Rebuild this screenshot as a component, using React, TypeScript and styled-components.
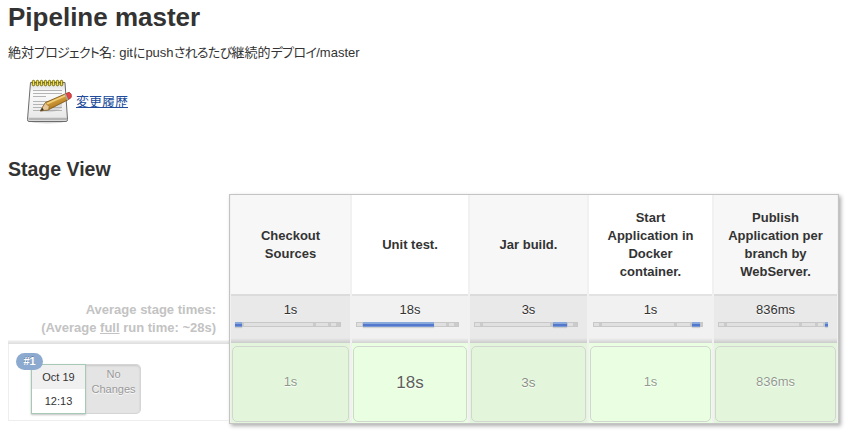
import React from "react";
import styled, { createGlobalStyle, css } from "styled-components";

const GlobalStyle = createGlobalStyle`
  body {
    margin: 0;
    background: #fff;
    color: #333;
    font: 13px/18px "Liberation Sans", "Noto Sans CJK JP", sans-serif;
  }
`;

const Page = styled.main`
  width: 848px;
  height: 433px;
  box-sizing: border-box;
  padding: 0 9px 0 8px;
  overflow: hidden;
`;

const Title = styled.h1`
  margin: 0;
  padding-top: 1px;
  font-size: 26px;
  line-height: 32px;
`;

const ProjectName = styled.p`
  margin: 11px 0 0;
  height: 18px;
  white-space: nowrap;
  font-feature-settings: "palt";
`;

const Kana = styled.span<{ $spacing: number }>`
  letter-spacing: ${(p) => p.$spacing}px;
`;

const Changes = styled.div`
  display: flex;
  align-items: center;
  gap: 2px;
  height: 48px;
  margin: 15px 0 0 16px;
`;

const ChangesLink = styled.a`
  color: #204a9a;
  text-decoration: underline;
  margin-top: 2px;
`;

const Heading = styled.h2`
  margin: 32px 0 0;
  font-size: 19.5px;
  line-height: 24px;
`;

const StageView = styled.section`
  display: grid;
  grid-template-columns: 221px 610px;
  margin-top: 13px;
`;

const RunColumn = styled.div`
  display: flex;
  flex-direction: column;
`;

const AverageLabel = styled.div`
  box-sizing: border-box;
  height: 150px;
  padding: 107px 13px 0 0;
  text-align: right;
  font-weight: bold;
  color: #c3c3c3;
  background: linear-gradient(to bottom, transparent 146px, #ececec 147px, #dedede 150px);
`;

const Run = styled.div`
  position: relative;
  box-sizing: border-box;
  height: 77px;
  border: solid #eee;
  border-width: 0 0 1px 1px;
  padding: 20px 0 0 22px;
  display: flex;
`;

const Badge = styled.span`
  position: absolute;
  left: 7px;
  top: 9px;
  width: 27px;
  height: 17px;
  border-radius: 9px;
  background: #8caad0;
  color: #fff;
  font: bold 11px/17px "Liberation Sans", sans-serif;
  text-align: center;
  text-shadow: 0 -1px 0 rgba(0, 0, 0, 0.25);
`;

const Stamp = styled.div`
  box-sizing: border-box;
  width: 55px;
  height: 50px;
  border: 1px solid #a6c9b5;
  box-shadow: 0 1px 2px rgba(0, 0, 0, 0.25);
  font-size: 11px;
  line-height: 24px;
  text-align: center;
  background: linear-gradient(#f0f0f0 24px, #fff 24px);
`;

const Commits = styled.div`
  box-sizing: border-box;
  width: 55px;
  height: 50px;
  border: 1px solid #d5d5d5;
  border-left: 0;
  border-radius: 0 5px 5px 0;
  background: #e4e4e4;
  box-shadow: inset 0 1px 2px rgba(0, 0, 0, 0.12);
  padding: 2px 4px 0 5px;
  color: #999;
  font-size: 11px;
  line-height: 15px;
  text-align: center;
  text-shadow: 0 1px 1px #fff;
`;

const StageTable = styled.div`
  box-sizing: border-box;
  height: 230px;
  border: 1px solid #c4c4c4;
  box-shadow: 2px 2px 4px rgba(0, 0, 0, 0.32);
  display: grid;
  grid-template-columns: 121px 118px 119px 125px 125px;
`;

const Stage = styled.div<{ $odd: boolean }>`
  display: grid;
  grid-template-rows: 99px 49px 80px;
  ${(p) =>
    p.$odd
      ? css`
          --head: #f7f7f7;
          --avg: #e9e9e9;
          --cell: #e3f6dc;
        `
      : css`
          --head: #fff;
          --avg: #f1f1f1;
          --cell: #eaffe2;
        `}
`;

const StageName = styled.div`
  display: flex;
  align-items: center;
  justify-content: center;
  padding: 0 12px;
  background: var(--head);
  border: solid #f1f1f1;
  border-width: 0 1px;
  text-align: center;
  font-weight: bold;
`;

const Average = styled.div`
  box-sizing: border-box;
  border: solid #f1f1f1;
  border-width: 0 1px;
  background:
    linear-gradient(rgba(0, 0, 0, 0.06), rgba(0, 0, 0, 0.06)) top / 100% 2px no-repeat,
    linear-gradient(transparent, rgba(0, 0, 0, 0.13)) bottom / 100% 5px no-repeat,
    var(--avg);
  padding: 7px 9px 0 4px;
  text-align: center;
  text-shadow: 0 1px 1px #fff;

  & > span {
    display: block;
    height: 18px;
    margin-right: -5px;
  }
`;

const Track = styled.div`
  position: relative;
  height: 5px;
  box-sizing: border-box;
  margin-top: 3px;
  border: 1px solid #c8c8c8;
  background:
    linear-gradient(#cbcbcb, #cbcbcb) 5% 0 / 3px 100% no-repeat,
    linear-gradient(#cbcbcb, #cbcbcb) 76% 0 / 3px 100% no-repeat,
    linear-gradient(#cbcbcb, #cbcbcb) 91% 0 / 3px 100% no-repeat,
    linear-gradient(#cbcbcb, #cbcbcb) 100% 0 / 4px 100% no-repeat,
    #e0e0e0;
`;

const Fill = styled.div`
  position: absolute;
  top: -1px;
  height: 5px;
  background: linear-gradient(#8aa9db 0 2px, #5478cd 2px 4px, #7999d5 4px);
  box-shadow: 0 1px 1px rgba(0, 0, 0, 0.12);
`;

const Cell = styled.div`
  box-sizing: border-box;
  border: solid #f1f1f1;
  border-width: 0 1px;
  padding: 3px 1px 1px;
  background: var(--cell);
`;

const Result = styled.div<{ $size: number; $strength: number }>`
  box-sizing: border-box;
  height: 76px;
  border: 1px solid #d2d6d0;
  border-radius: 5px;
  line-height: ${(p) => (p.$size > 13 ? 71 : 70)}px;
  text-align: center;
  font-size: ${(p) => p.$size}px;
  color: rgba(51, 51, 51, ${(p) => p.$strength});
  text-shadow: 0 1px 1px #fff;
`;

const stages = [
  { name: "Checkout Sources", time: "1s", start: 0, width: 7, size: 13, strength: 0.5 },
  { name: "Unit test.", time: "18s", start: 7, width: 71, size: 17, strength: 0.8 },
  { name: "Jar build.", time: "3s", start: 79, width: 14, size: 13.5, strength: 0.55 },
  { name: "Start Application in Docker container.", time: "1s", start: 99, width: 8, size: 13, strength: 0.5 },
  { name: "Publish Application per branch by WebServer.", time: "836ms", start: 107, width: 3, size: 13, strength: 0.5 },
];

const rings = [0, 1, 2, 3, 4, 5, 6, 7];

function NotepadIcon() {
  return (
    <svg width="50" height="48" viewBox="0 0 50 48" aria-hidden="true">
      <defs>
        <linearGradient id="paper" x1="0" y1="0" x2="0" y2="1">
          <stop offset="0" stopColor="#dcdcdc" />
          <stop offset=".25" stopColor="#fafafa" />
          <stop offset="1" stopColor="#e6e6e6" />
        </linearGradient>
        <linearGradient id="wood" x1="0" y1="0" x2=".6" y2="1">
          <stop offset="0" stopColor="#efcd7c" />
          <stop offset=".5" stopColor="#d6a03c" />
          <stop offset="1" stopColor="#96600e" />
        </linearGradient>
      </defs>
      <ellipse cx="23.500" cy="45" rx="16" ry="1.500" fill="#ccc" opacity=".7" />
      <path d="M6.500 5.500h34.500l2.500 37q0 2-1.500 2h-37q-1.500 0-1.500-2z" fill="url(#paper)" stroke="#6b6b6b" />
      <path d="M4.500 42h38.500" stroke="#b5b5b5" strokeWidth="2.500" />
      <path d="M9 13.500h29M9 16.500h29M9 19.500h13M9 24.500h21M9 27.500h16M9 30.500h29M9 33.500h29" stroke="#b4b4b4" />
      <path d="M18 34q12-1 20-8v5q-9 6-20 3.500" fill="#999" opacity=".28" />
      {rings.map((i) => (
        <rect key={i} x={8.3 + i * 4} y="3.300" width="2.400" height="5.500" rx="1.200" fill="#efe050" stroke="#776900" strokeWidth="1" />
      ))}
      <path d="M16.300 34l5.200-8.500 20-8.700 3.800-1.300q2.500 1.500 1.700 5l-3 2.300-19.500 10z" fill="url(#wood)" stroke="#704c14" strokeWidth=".8" />
      <path d="M22.500 27l19-8.500" stroke="#f1cf7b" strokeWidth="1.500" />
      <path d="M16.300 34l5.200-8.500 1.700 2.500 2 .8-.7 4z" fill="#e7c797" stroke="#846027" strokeWidth=".5" />
      <path d="M16.300 34l2-3.200 1.700 2.400z" fill="#37312a" />
      <path d="M40.500 17.300l1.800-.8 2.700 5.700-2 1.100z" fill="#aaa8a0" />
      <path d="M42.200 16.500l3-1.300q2.900 1.500 2 5.200l-2.600 2z" fill="#e94246" stroke="#a9343a" strokeWidth=".5" />
    </svg>
  );
}

export default function App() {
  return (
    <Page>
      <GlobalStyle />
      <Title>Pipeline master</Title>
      <ProjectName>
        絶対<Kana $spacing={-0.8}>プロジェクト</Kana>名: gitにpush
        <Kana $spacing={-0.65}>されるたび</Kana>継続的<Kana $spacing={-0.65}>デプロイ</Kana>/master
      </ProjectName>
      <Changes>
        <NotepadIcon />
        <ChangesLink href="#changes">変更履歴</ChangesLink>
      </Changes>
      <Heading>Stage View</Heading>
      <StageView>
        <RunColumn>
          <AverageLabel>
            Average stage times:
            <br />
            (Average <u>full</u> run time: ~28s)
          </AverageLabel>
          <Run>
            <Stamp>
              <div>Oct 19</div>
              <div>12:13</div>
            </Stamp>
            <Commits>No Changes</Commits>
            <Badge>#1</Badge>
          </Run>
        </RunColumn>
        <StageTable>
          {stages.map((s, i) => (
            <Stage key={s.name} $odd={i % 2 === 0}>
              <StageName>{s.name}</StageName>
              <Average>
                <span>{s.time}</span>
                <Track>
                  <Fill style={{ left: s.start - 1, width: s.width }} />
                </Track>
              </Average>
              <Cell>
                <Result $size={s.size} $strength={s.strength}>
                  {s.time}
                </Result>
              </Cell>
            </Stage>
          ))}
        </StageTable>
      </StageView>
    </Page>
  );
}
